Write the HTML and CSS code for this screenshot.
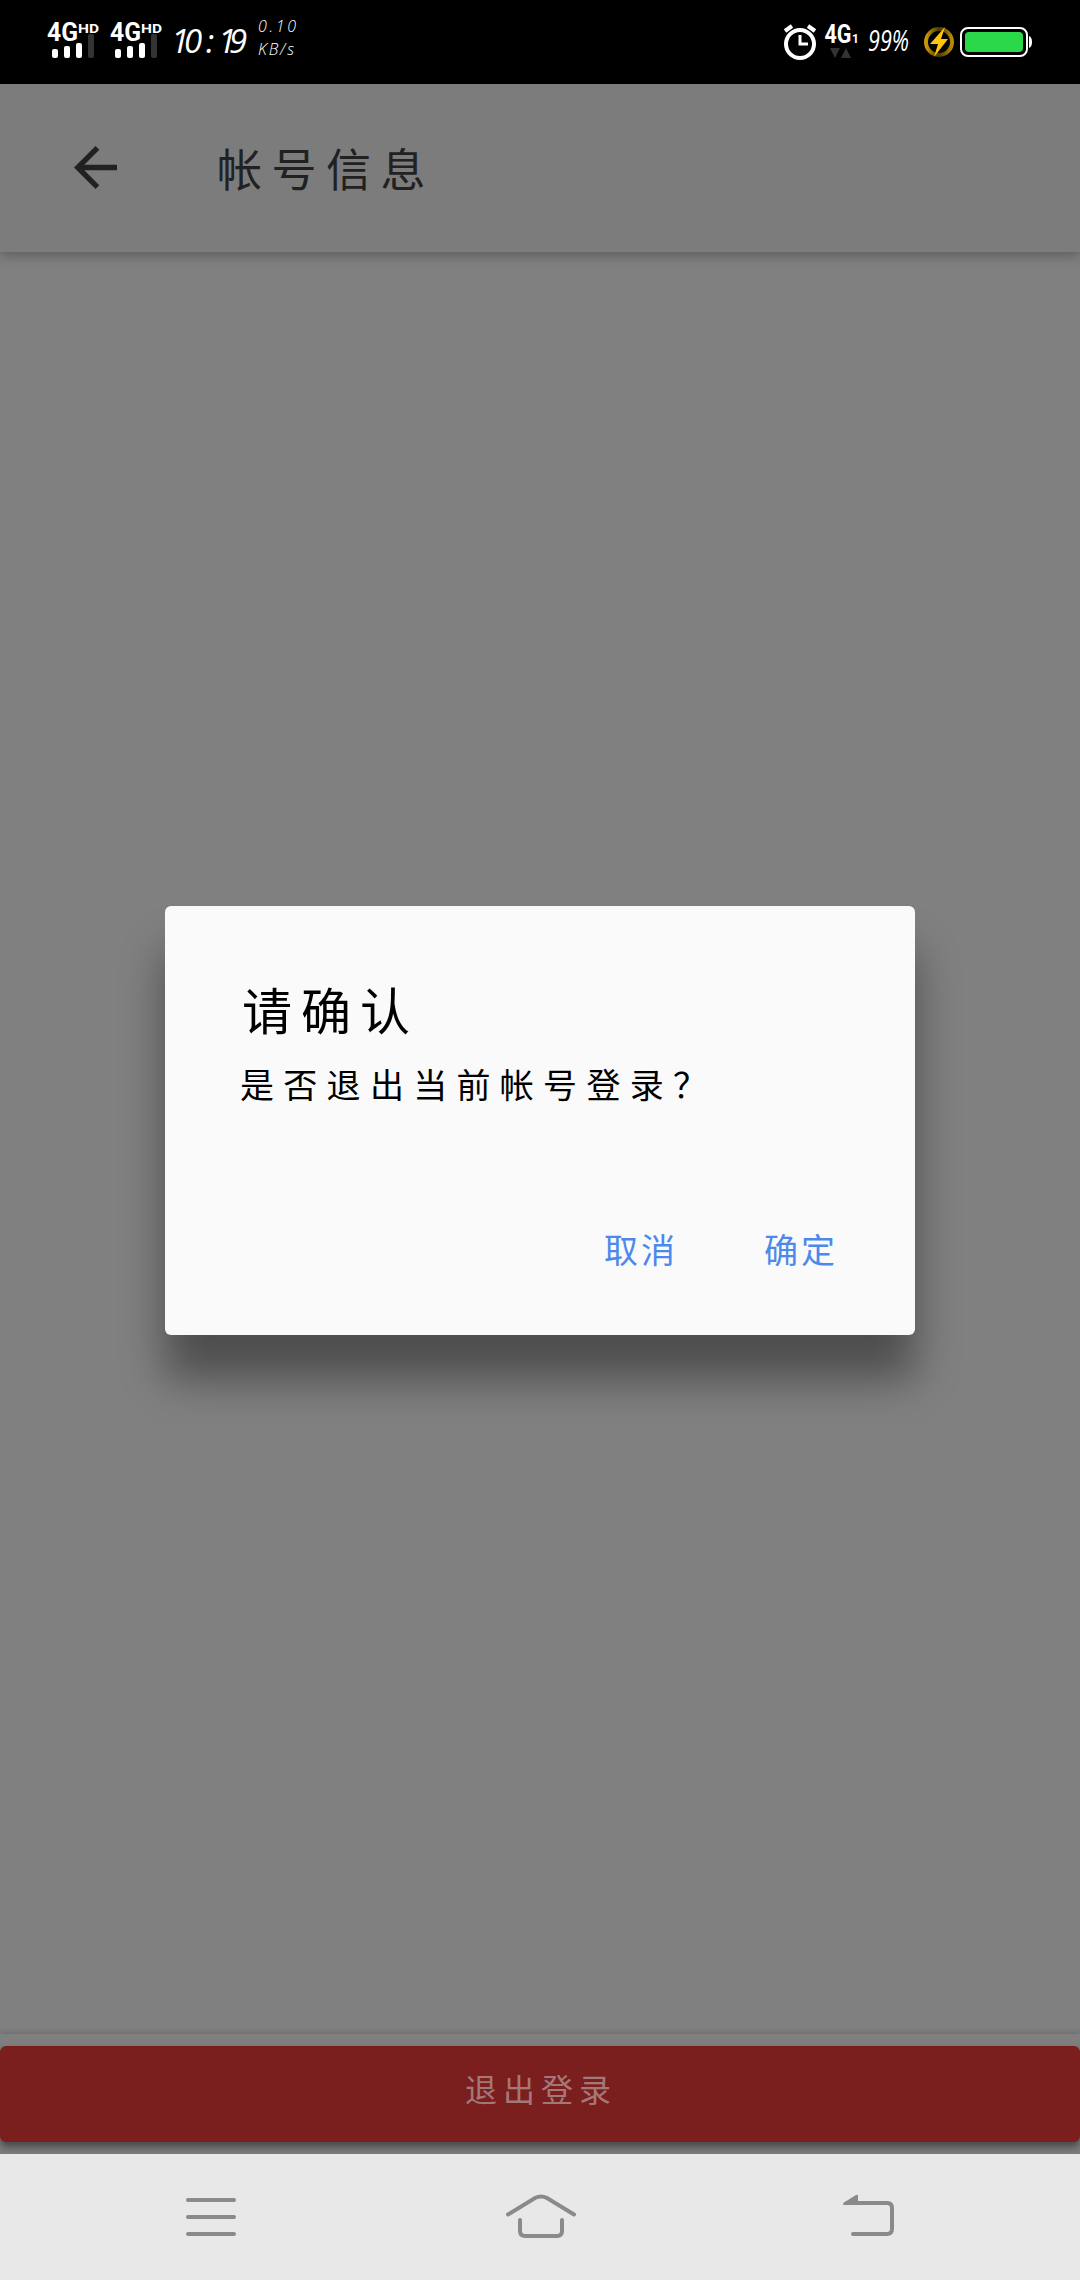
FILE: index.html
```html
<!DOCTYPE html>
<html lang="zh-CN">
<head>
<meta charset="utf-8">
<title>帐号信息</title>
<link rel="stylesheet" href="styles.css">
</head>
<body>
<div class="screen">
  <header class="status">
    <svg class="status-left" width="320" height="84" viewBox="0 0 320 84">
      <defs>
        <g id="signal">
          <text class="net" x="47" y="41" textLength="31" lengthAdjust="spacingAndGlyphs">4G</text>
          <text class="hd" x="78" y="33" textLength="21" lengthAdjust="spacingAndGlyphs">HD</text>
          <rect x="52" y="49" width="6" height="9" rx="2"/>
          <rect x="64" y="46" width="6" height="12" rx="2"/>
          <rect x="76" y="43" width="6" height="15" rx="2"/>
          <rect class="dim" x="88" y="34" width="6" height="24" rx="2"/>
        </g>
      </defs>
      <use href="#signal"/>
      <use href="#signal" x="63"/>
      <text class="clock" x="171 184 206 218 229" y="53">10:19</text>
      <text class="speed" x="258" y="32" textLength="38" lengthAdjust="spacing">0.10</text>
      <text class="speed" x="258" y="55" textLength="36" lengthAdjust="spacing">KB/s</text>
    </svg>
    <svg class="status-right" width="300" height="84" viewBox="760 0 300 84">
      <defs>
        <linearGradient id="ring" x1="0" y1="0" x2="1" y2="0">
          <stop offset="0" stop-color="#c99a06"/>
          <stop offset=".5" stop-color="#4a3800"/>
          <stop offset="1" stop-color="#b88c05"/>
        </linearGradient>
      </defs>
      <g fill="none" stroke="#fff" stroke-width="4">
        <circle cx="800" cy="44" r="14"/>
        <path d="M785 31l7-5M808 26l7 5"/>
        <path d="M800 35v9h8" stroke-width="3"/>
      </g>
      <text class="net" x="824.500" y="43" textLength="27" lengthAdjust="spacingAndGlyphs">4G</text>
      <text class="sim" x="852" y="43">1</text>
      <path class="dim" d="M830 48h10l-5 10zM841 58h10l-5-10z"/>
      <text class="percent" x="868" y="51" textLength="41" lengthAdjust="spacingAndGlyphs">99%</text>
      <circle cx="939" cy="42" r="13" fill="none" stroke="url(#ring)" stroke-width="4"/>
      <path d="M945 27l-15 17h8l-4 13 14-18h-7z" fill="#ffc60a"/>
      <rect x="961" y="28" width="66" height="28" rx="7" fill="none" stroke="#fff" stroke-width="2"/>
      <rect x="965" y="32" width="58" height="20" rx="4" fill="#2ad84a"/>
      <path d="M1029 36q3 1 3 6t-3 6z" fill="#fff"/>
    </svg>
  </header>

  <main class="app">
    <div class="appbar">
      <svg class="back" width="48" height="48" viewBox="0 0 16 16"><path d="M16 7H3.830l5.590-5.590L8 0 0 8l8 8 1.410-1.410L3.830 9H16z"/></svg>
      <h1 class="title">帐号信息</h1>
    </div>
    <div class="content">
      <section class="dialog">
        <h2 class="dialog-title">请确认</h2>
        <p class="dialog-text">是否退出当前帐号登录？</p>
        <div class="actions">
          <button class="action">取消</button>
          <button class="action">确定</button>
        </div>
      </section>
    </div>
    <footer class="bottom">
      <button class="logout">退出登录</button>
    </footer>
  </main>

  <nav class="nav">
    <svg width="50" height="48" viewBox="0 0 50 48"><path d="M2 7h46M2 24h46M2 41h46"/></svg>
    <svg width="72" height="48" viewBox="504 2193 72 48"><path d="M508 2214.500L535 2198q6-3 12 0l27 16.500M520 2220v11q0 5 5 5h32q5 0 5-5v-11"/></svg>
    <svg width="52" height="48" viewBox="843 2193 52 48"><path d="M847 2203h40q5 0 5 5v21q0 5-5 5h-34"/><path class="tip" d="M844 2202.500l12-7.500q2-1 2 1v9h-14q-2-1 0-2.500z"/></svg>
  </nav>
</div>
</body>
</html>
```
FILE: styles.css
```css
* { box-sizing: border-box; margin: 0; padding: 0; }

body {
  font-family: "Noto Sans CJK SC", "Noto Sans", sans-serif;
  font-weight: 400;
  background: #808080;
}

button {
  border: 0;
  background: none;
  font: inherit;
}

.screen {
  display: flex;
  flex-direction: column;
  width: 1080px;
  height: 2280px;
  overflow: hidden;
}

.status {
  display: flex;
  justify-content: space-between;
  height: 84px;
  padding-right: 20px;
  background: #000;
  fill: #fff;
}

.net { font: 700 25px Roboto, sans-serif; }
.hd { font: 700 13.5px Roboto, sans-serif; }
.sim { font: 700 12px Roboto, sans-serif; }
.dim { fill: #333; }
.clock { font: italic 400 33px "Open Sans", sans-serif; }
.speed { font: italic 300 16px "Open Sans", sans-serif; }
.percent { font: italic 400 29px "Open Sans", sans-serif; }

.app {
  display: flex;
  flex-direction: column;
  height: 2070px;
  background: #808080;
}

.appbar {
  display: flex;
  align-items: center;
  gap: 97px;
  height: 168px;
  padding: 0 0 2px 74px;
  background: #7c7c7c;
  box-shadow: 0 3px 12px rgba(0, 0, 0, .3);
}

.back { width: 43px; height: 43px; fill: #212121; }

.title {
  margin: 2px 0 0 3px;
  font-size: 45px;
  font-weight: 400;
  line-height: 60px;
  letter-spacing: 9.5px;
  color: #212121;
}

.content {
  flex: 1;
  padding: 654px 165px 0;
}

.dialog {
  height: 429px;
  padding: 69px 72px 0 75px;
  border-radius: 6px;
  background: #fafafa;
  box-shadow: 0 44px 44px rgba(0, 0, 0, .4);
  color: #000;
}

.dialog-title {
  padding-left: 2px;
  font-size: 50px;
  font-weight: 400;
  line-height: 66px;
  letter-spacing: 9px;
}

.dialog-text {
  margin-top: 18px;
  font-size: 34px;
  line-height: 50px;
  letter-spacing: 9.3px;
}

.actions {
  display: flex;
  justify-content: flex-end;
  gap: 86px;
  margin-top: 115px;
  padding-right: 5px;
}

.action {
  font-size: 34px;
  font-weight: 400;
  line-height: 50px;
  letter-spacing: 3px;
  color: #4d89ea;
}

.bottom {
  height: 120px;
  padding: 12px 0;
  background: #7f7f7f;
  box-shadow: 0 -1px 6px rgba(0, 0, 0, .2);
}

.logout {
  display: block;
  width: 1080px;
  height: 96px;
  padding: 0 0 12px 2px;
  border-radius: 6px;
  background: #7b1e1e;
  box-shadow: 0 5px 8px rgba(0, 0, 0, .45);
  font-size: 32px;
  font-weight: 400;
  letter-spacing: 6px;
  color: #a57878;
}

.nav {
  position: relative;
  display: flex;
  justify-content: space-between;
  height: 126px;
  padding: 39px 185px 0 186px;
  background: #e8e8e8;
  fill: none;
  stroke: #8a8a8a;
  stroke-width: 4;
  stroke-linecap: round;
}

.tip { fill: #8a8a8a; stroke: none; }
```
